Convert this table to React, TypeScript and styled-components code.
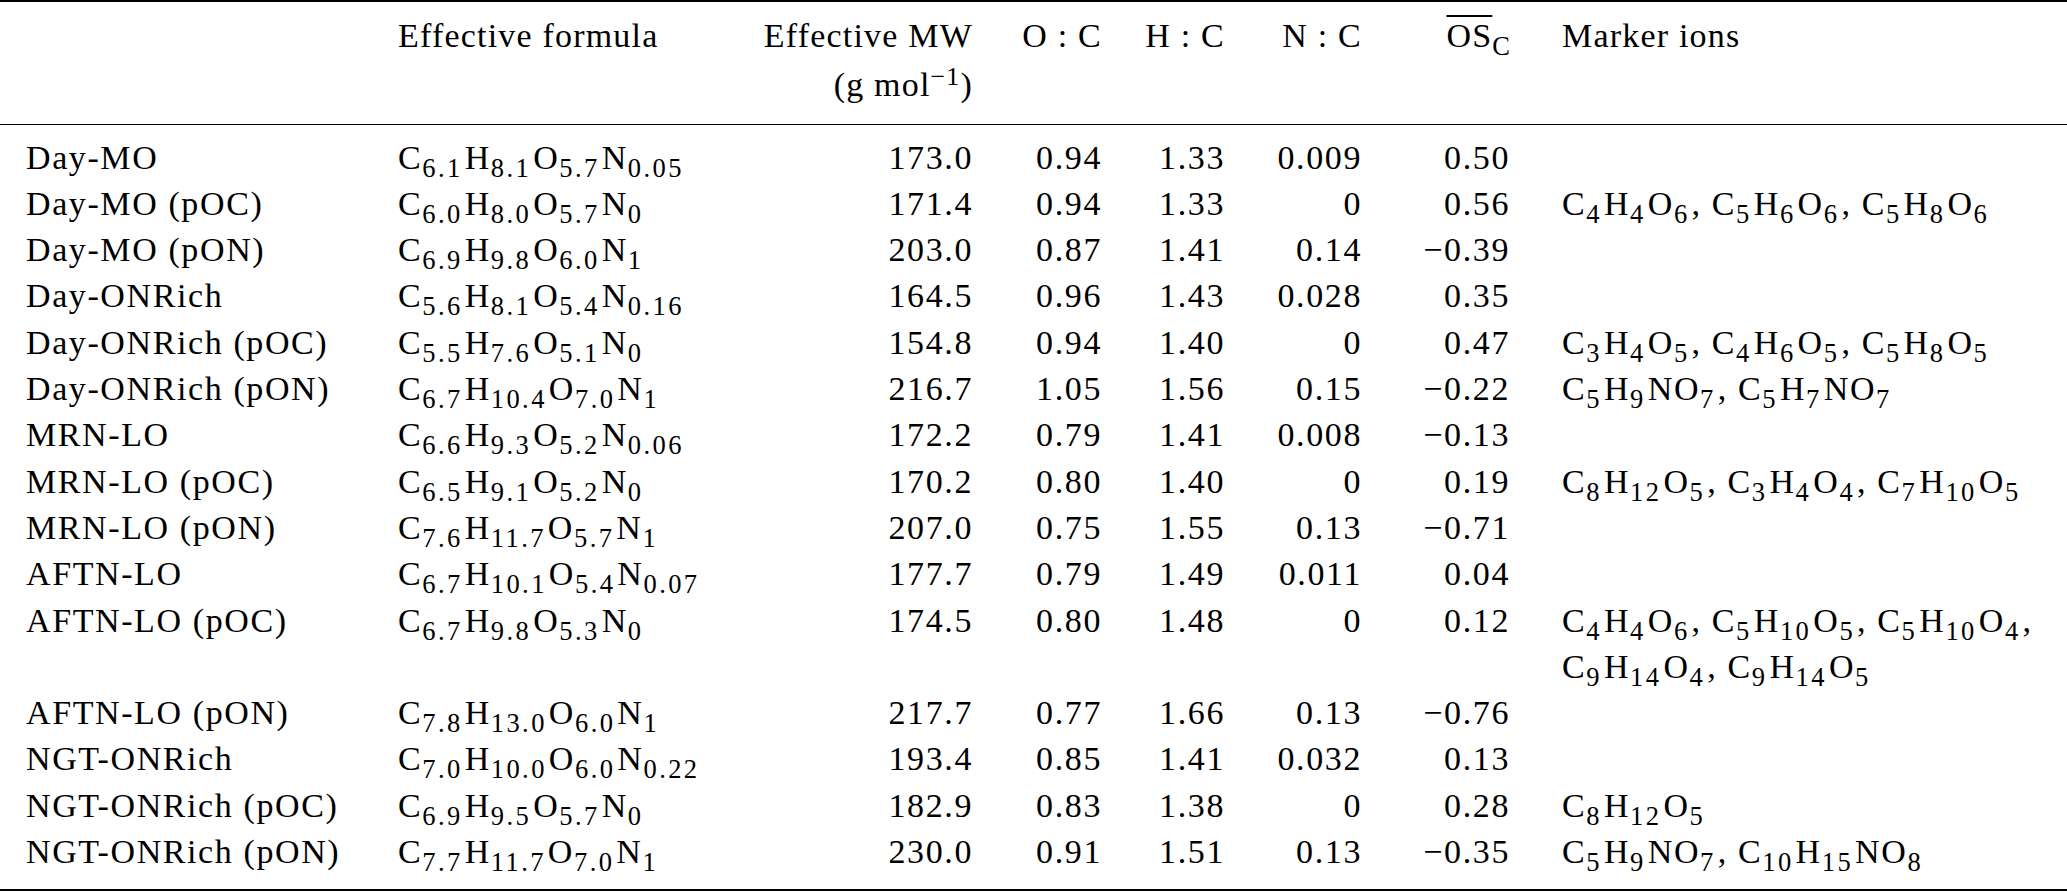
import React from "react"
import styled, { createGlobalStyle } from "styled-components"

const GlobalStyle = createGlobalStyle`
  html, body {
    margin: 0;
    padding: 0;
    background: #fff;
  }
`

type Row = [string, string, string, string, string, string, string, string]

const rows: Row[] = [
  ["Day-MO", "C6.1H8.1O5.7N0.05", "173.0", "0.94", "1.33", "0.009", "0.50", ""],
  ["Day-MO (pOC)", "C6.0H8.0O5.7N0", "171.4", "0.94", "1.33", "0", "0.56", "C4H4O6, C5H6O6, C5H8O6"],
  ["Day-MO (pON)", "C6.9H9.8O6.0N1", "203.0", "0.87", "1.41", "0.14", "−0.39", ""],
  ["Day-ONRich", "C5.6H8.1O5.4N0.16", "164.5", "0.96", "1.43", "0.028", "0.35", ""],
  ["Day-ONRich (pOC)", "C5.5H7.6O5.1N0", "154.8", "0.94", "1.40", "0", "0.47", "C3H4O5, C4H6O5, C5H8O5"],
  ["Day-ONRich (pON)", "C6.7H10.4O7.0N1", "216.7", "1.05", "1.56", "0.15", "−0.22", "C5H9NO7, C5H7NO7"],
  ["MRN-LO", "C6.6H9.3O5.2N0.06", "172.2", "0.79", "1.41", "0.008", "−0.13", ""],
  ["MRN-LO (pOC)", "C6.5H9.1O5.2N0", "170.2", "0.80", "1.40", "0", "0.19", "C8H12O5, C3H4O4, C7H10O5"],
  ["MRN-LO (pON)", "C7.6H11.7O5.7N1", "207.0", "0.75", "1.55", "0.13", "−0.71", ""],
  ["AFTN-LO", "C6.7H10.1O5.4N0.07", "177.7", "0.79", "1.49", "0.011", "0.04", ""],
  ["AFTN-LO (pOC)", "C6.7H9.8O5.3N0", "174.5", "0.80", "1.48", "0", "0.12", "C4H4O6, C5H10O5, C5H10O4|C9H14O4, C9H14O5"],
  ["AFTN-LO (pON)", "C7.8H13.0O6.0N1", "217.7", "0.77", "1.66", "0.13", "−0.76", ""],
  ["NGT-ONRich", "C7.0H10.0O6.0N0.22", "193.4", "0.85", "1.41", "0.032", "0.13", ""],
  ["NGT-ONRich (pOC)", "C6.9H9.5O5.7N0", "182.9", "0.83", "1.38", "0", "0.28", "C8H12O5"],
  ["NGT-ONRich (pON)", "C7.7H11.7O7.0N1", "230.0", "0.91", "1.51", "0.13", "−0.35", "C5H9NO7, C10H15NO8"],
]

// column widths in px, they add up to the page width
const widths = [398, 342, 233, 129, 123, 137, 148, 557]

const Formula = ({ value }: { value: string }) => {
  const parts = Array.from(value.matchAll(/([A-Z][a-z]?)([\d.]*)/g))
  return (
    <>
      {parts.map((m, i) => (
        <React.Fragment key={i}>
          {m[1]}
          {m[2] && <Sub>{m[2]}</Sub>}
        </React.Fragment>
      ))}
    </>
  )
}

const Ions = ({ value }: { value: string }) => {
  if (!value) return null
  const lines = value.split("|")
  return (
    <>
      {lines.map((line, li) => (
        <IonLine key={li}>
          {line.split(", ").map((ion, i, all) => (
            <React.Fragment key={i}>
              <Formula value={ion} />
              {(i < all.length - 1 || li < lines.length - 1) && ", "}
            </React.Fragment>
          ))}
        </IonLine>
      ))}
    </>
  )
}

const App = () => {
  return (
    <>
      <GlobalStyle />
      <Table>
        <colgroup>
          {widths.map((w, i) => (
            <col key={i} style={{ width: w }} />
          ))}
        </colgroup>
        <thead>
          <tr>
            <Head $first />
            <Head>Effective formula</Head>
            <Head $right>
              Effective MW
              <Unit>
                (g mol<Sup>−1</Sup>)
              </Unit>
            </Head>
            <Head $right>O : C</Head>
            <Head $right>H : C</Head>
            <Head $right>N : C</Head>
            <Head $right>
              <Over>OS</Over>
              <HeadSub>C</HeadSub>
            </Head>
            <Head $last>Marker ions</Head>
          </tr>
        </thead>
        <tbody>
          {rows.map((r, i) => {
            const edge = i === 0 ? "top" : i === rows.length - 1 ? "bottom" : undefined
            return (
              <tr key={r[0]}>
                <Cell $first $edge={edge}>{r[0]}</Cell>
                <Cell $edge={edge}>
                  <Formula value={r[1]} />
                </Cell>
                <Cell $right $edge={edge}>{r[2]}</Cell>
                <Cell $right $edge={edge}>{r[3]}</Cell>
                <Cell $right $edge={edge}>{r[4]}</Cell>
                <Cell $right $edge={edge}>{r[5]}</Cell>
                <Cell $right $edge={edge}>{r[6]}</Cell>
                <Cell $last $edge={edge}>
                  <Ions value={r[7]} />
                </Cell>
              </tr>
            )
          })}
        </tbody>
      </Table>
    </>
  )
}

const Table = styled.table`
  width: 2067px;
  table-layout: fixed;
  border-collapse: separate;
  border-spacing: 0;
  border-top: 2px solid #000;
  border-bottom: 2px solid #000;
  font-family: "Liberation Serif", "Times New Roman", serif;
  font-size: 34px;
  letter-spacing: 1.6px;
  line-height: 46.3px;
  color: #000;
`

type CellProps = {
  $right?: boolean
  $first?: boolean
  $last?: boolean
  $edge?: "top" | "bottom"
}

const Head = styled.th<CellProps>`
  font-weight: normal;
  vertical-align: top;
  white-space: nowrap;
  letter-spacing: 1.2px;
  text-align: ${p => (p.$right ? "right" : "left")};
  padding: 11px 0 15px ${p => (p.$first ? "26px" : p.$last ? "52px" : "0")};
  border-bottom: 1.3px solid #000;
`

const Unit = styled.span`
  display: block;
  margin-top: 3px;
`

const Cell = styled.td<CellProps>`
  vertical-align: top;
  white-space: nowrap;
  text-align: ${p => (p.$right ? "right" : "left")};
  padding: ${p => (p.$edge === "top" ? "10px" : "0")} 0
    ${p => (p.$edge === "bottom" ? "14px" : "0")}
    ${p => (p.$first ? "26px" : p.$last ? "52px" : "0")};
`

const Sub = styled.sub`
  font-size: 0.78em;
  letter-spacing: 2.4px;
  vertical-align: -0.3em;
  line-height: 0;
  margin-right: 2px;
`

const HeadSub = styled(Sub)`
  margin-right: 0;
  letter-spacing: 0;
`

const Sup = styled.sup`
  font-size: 0.76em;
  vertical-align: 0.42em;
  line-height: 0;
`

const Over = styled.span`
  text-decoration: overline;
  text-decoration-thickness: 1.5px;
`

const IonLine = styled.div`
  white-space: nowrap;
`

export default App
